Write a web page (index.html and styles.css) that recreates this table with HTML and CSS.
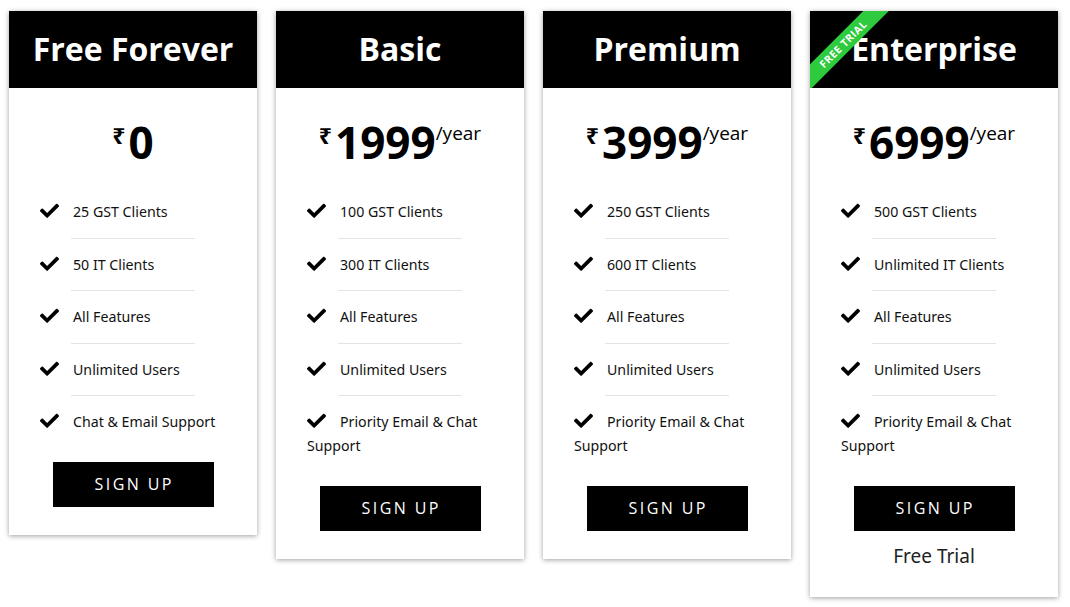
FILE: index.html
```html
<!DOCTYPE html>
<html>
<head>
<meta charset="utf-8">
<link rel="stylesheet" href="styles.css">
</head>
<body>
<div class="plans">
  <div class="card">
    <div class="card-head"><h2>Free Forever</h2></div>
    <div class="price"><span class="cur">₹</span><span class="amt">0</span></div>
    <ul class="features">
      <li><svg class="chk" viewBox="0 0 512 400"><path d="M173.9 391.4l-166.4-166.4c-10-10-10-26.2 0-36.2l36.2-36.2c10-10 26.2-10 36.2 0L192 264.7 432.1 24.6c10-10 26.2-10 36.2 0l36.2 36.2c10 10 10 26.2 0 36.2l-294.4 294.4c-10 10-26.2 10-36.2 0z"/></svg>25 GST Clients</li>
      <li><svg class="chk" viewBox="0 0 512 400"><path d="M173.9 391.4l-166.4-166.4c-10-10-10-26.2 0-36.2l36.2-36.2c10-10 26.2-10 36.2 0L192 264.7 432.1 24.6c10-10 26.2-10 36.2 0l36.2 36.2c10 10 10 26.2 0 36.2l-294.4 294.4c-10 10-26.2 10-36.2 0z"/></svg>50 IT Clients</li>
      <li><svg class="chk" viewBox="0 0 512 400"><path d="M173.9 391.4l-166.4-166.4c-10-10-10-26.2 0-36.2l36.2-36.2c10-10 26.2-10 36.2 0L192 264.7 432.1 24.6c10-10 26.2-10 36.2 0l36.2 36.2c10 10 10 26.2 0 36.2l-294.4 294.4c-10 10-26.2 10-36.2 0z"/></svg>All Features</li>
      <li><svg class="chk" viewBox="0 0 512 400"><path d="M173.9 391.4l-166.4-166.4c-10-10-10-26.2 0-36.2l36.2-36.2c10-10 26.2-10 36.2 0L192 264.7 432.1 24.6c10-10 26.2-10 36.2 0l36.2 36.2c10 10 10 26.2 0 36.2l-294.4 294.4c-10 10-26.2 10-36.2 0z"/></svg>Unlimited Users</li>
      <li><svg class="chk" viewBox="0 0 512 400"><path d="M173.9 391.4l-166.4-166.4c-10-10-10-26.2 0-36.2l36.2-36.2c10-10 26.2-10 36.2 0L192 264.7 432.1 24.6c10-10 26.2-10 36.2 0l36.2 36.2c10 10 10 26.2 0 36.2l-294.4 294.4c-10 10-26.2 10-36.2 0z"/></svg>Chat &amp; Email Support</li>
    </ul>
    <a class="btn">SIGN UP</a>
  </div>

  <div class="card">
    <div class="card-head"><h2>Basic</h2></div>
    <div class="price"><span class="cur">₹</span><span class="amt">1999</span><span class="per">/year</span></div>
    <ul class="features">
      <li><svg class="chk" viewBox="0 0 512 400"><path d="M173.9 391.4l-166.4-166.4c-10-10-10-26.2 0-36.2l36.2-36.2c10-10 26.2-10 36.2 0L192 264.7 432.1 24.6c10-10 26.2-10 36.2 0l36.2 36.2c10 10 10 26.2 0 36.2l-294.4 294.4c-10 10-26.2 10-36.2 0z"/></svg>100 GST Clients</li>
      <li><svg class="chk" viewBox="0 0 512 400"><path d="M173.9 391.4l-166.4-166.4c-10-10-10-26.2 0-36.2l36.2-36.2c10-10 26.2-10 36.2 0L192 264.7 432.1 24.6c10-10 26.2-10 36.2 0l36.2 36.2c10 10 10 26.2 0 36.2l-294.4 294.4c-10 10-26.2 10-36.2 0z"/></svg>300 IT Clients</li>
      <li><svg class="chk" viewBox="0 0 512 400"><path d="M173.9 391.4l-166.4-166.4c-10-10-10-26.2 0-36.2l36.2-36.2c10-10 26.2-10 36.2 0L192 264.7 432.1 24.6c10-10 26.2-10 36.2 0l36.2 36.2c10 10 10 26.2 0 36.2l-294.4 294.4c-10 10-26.2 10-36.2 0z"/></svg>All Features</li>
      <li><svg class="chk" viewBox="0 0 512 400"><path d="M173.9 391.4l-166.4-166.4c-10-10-10-26.2 0-36.2l36.2-36.2c10-10 26.2-10 36.2 0L192 264.7 432.1 24.6c10-10 26.2-10 36.2 0l36.2 36.2c10 10 10 26.2 0 36.2l-294.4 294.4c-10 10-26.2 10-36.2 0z"/></svg>Unlimited Users</li>
      <li><svg class="chk" viewBox="0 0 512 400"><path d="M173.9 391.4l-166.4-166.4c-10-10-10-26.2 0-36.2l36.2-36.2c10-10 26.2-10 36.2 0L192 264.7 432.1 24.6c10-10 26.2-10 36.2 0l36.2 36.2c10 10 10 26.2 0 36.2l-294.4 294.4c-10 10-26.2 10-36.2 0z"/></svg>Priority Email &amp; Chat Support</li>
    </ul>
    <a class="btn">SIGN UP</a>
  </div>

  <div class="card">
    <div class="card-head"><h2>Premium</h2></div>
    <div class="price"><span class="cur">₹</span><span class="amt">3999</span><span class="per">/year</span></div>
    <ul class="features">
      <li><svg class="chk" viewBox="0 0 512 400"><path d="M173.9 391.4l-166.4-166.4c-10-10-10-26.2 0-36.2l36.2-36.2c10-10 26.2-10 36.2 0L192 264.7 432.1 24.6c10-10 26.2-10 36.2 0l36.2 36.2c10 10 10 26.2 0 36.2l-294.4 294.4c-10 10-26.2 10-36.2 0z"/></svg>250 GST Clients</li>
      <li><svg class="chk" viewBox="0 0 512 400"><path d="M173.9 391.4l-166.4-166.4c-10-10-10-26.2 0-36.2l36.2-36.2c10-10 26.2-10 36.2 0L192 264.7 432.1 24.6c10-10 26.2-10 36.2 0l36.2 36.2c10 10 10 26.2 0 36.2l-294.4 294.4c-10 10-26.2 10-36.2 0z"/></svg>600 IT Clients</li>
      <li><svg class="chk" viewBox="0 0 512 400"><path d="M173.9 391.4l-166.4-166.4c-10-10-10-26.2 0-36.2l36.2-36.2c10-10 26.2-10 36.2 0L192 264.7 432.1 24.6c10-10 26.2-10 36.2 0l36.2 36.2c10 10 10 26.2 0 36.2l-294.4 294.4c-10 10-26.2 10-36.2 0z"/></svg>All Features</li>
      <li><svg class="chk" viewBox="0 0 512 400"><path d="M173.9 391.4l-166.4-166.4c-10-10-10-26.2 0-36.2l36.2-36.2c10-10 26.2-10 36.2 0L192 264.7 432.1 24.6c10-10 26.2-10 36.2 0l36.2 36.2c10 10 10 26.2 0 36.2l-294.4 294.4c-10 10-26.2 10-36.2 0z"/></svg>Unlimited Users</li>
      <li><svg class="chk" viewBox="0 0 512 400"><path d="M173.9 391.4l-166.4-166.4c-10-10-10-26.2 0-36.2l36.2-36.2c10-10 26.2-10 36.2 0L192 264.7 432.1 24.6c10-10 26.2-10 36.2 0l36.2 36.2c10 10 10 26.2 0 36.2l-294.4 294.4c-10 10-26.2 10-36.2 0z"/></svg>Priority Email &amp; Chat Support</li>
    </ul>
    <a class="btn">SIGN UP</a>
  </div>

  <div class="card">
    <div class="card-head"><h2>Enterprise</h2><span class="ribbon">FREE TRIAL</span></div>
    <div class="price"><span class="cur">₹</span><span class="amt">6999</span><span class="per">/year</span></div>
    <ul class="features">
      <li><svg class="chk" viewBox="0 0 512 400"><path d="M173.9 391.4l-166.4-166.4c-10-10-10-26.2 0-36.2l36.2-36.2c10-10 26.2-10 36.2 0L192 264.7 432.1 24.6c10-10 26.2-10 36.2 0l36.2 36.2c10 10 10 26.2 0 36.2l-294.4 294.4c-10 10-26.2 10-36.2 0z"/></svg>500 GST Clients</li>
      <li><svg class="chk" viewBox="0 0 512 400"><path d="M173.9 391.4l-166.4-166.4c-10-10-10-26.2 0-36.2l36.2-36.2c10-10 26.2-10 36.2 0L192 264.7 432.1 24.6c10-10 26.2-10 36.2 0l36.2 36.2c10 10 10 26.2 0 36.2l-294.4 294.4c-10 10-26.2 10-36.2 0z"/></svg>Unlimited IT Clients</li>
      <li><svg class="chk" viewBox="0 0 512 400"><path d="M173.9 391.4l-166.4-166.4c-10-10-10-26.2 0-36.2l36.2-36.2c10-10 26.2-10 36.2 0L192 264.7 432.1 24.6c10-10 26.2-10 36.2 0l36.2 36.2c10 10 10 26.2 0 36.2l-294.4 294.4c-10 10-26.2 10-36.2 0z"/></svg>All Features</li>
      <li><svg class="chk" viewBox="0 0 512 400"><path d="M173.9 391.4l-166.4-166.4c-10-10-10-26.2 0-36.2l36.2-36.2c10-10 26.2-10 36.2 0L192 264.7 432.1 24.6c10-10 26.2-10 36.2 0l36.2 36.2c10 10 10 26.2 0 36.2l-294.4 294.4c-10 10-26.2 10-36.2 0z"/></svg>Unlimited Users</li>
      <li><svg class="chk" viewBox="0 0 512 400"><path d="M173.9 391.4l-166.4-166.4c-10-10-10-26.2 0-36.2l36.2-36.2c10-10 26.2-10 36.2 0L192 264.7 432.1 24.6c10-10 26.2-10 36.2 0l36.2 36.2c10 10 10 26.2 0 36.2l-294.4 294.4c-10 10-26.2 10-36.2 0z"/></svg>Priority Email &amp; Chat Support</li>
    </ul>
    <a class="btn">SIGN UP</a>
    <div class="trial">Free Trial</div>
  </div>
</div>
</body>
</html>
```

FILE: styles.css
```css
* { box-sizing: border-box; }
html, body { margin: 0; background: #fff; }
body {
  font-family: "Open Sans", "Noto Sans", "DejaVu Sans", sans-serif;
  color: #111;
}
.plans {
  display: flex;
  align-items: flex-start;
  gap: 19px;
  padding: 11px 9px;
}
.card {
  width: 248px;
  background: #fff;
  box-shadow: 0 1px 5px rgba(0, 0, 0, 0.38);
  display: flex;
  flex-direction: column;
  align-items: center;
  padding-bottom: 28px;
}
.card-head {
  position: relative;
  overflow: hidden;
  align-self: stretch;
  height: 77px;
  background: #000;
  display: flex;
  align-items: center;
  justify-content: center;
}
.card-head h2 {
  margin: -2px 0 0;
  color: #fff;
  font-size: 32px;
  font-weight: 700;
  line-height: 1;
}
.ribbon {
  position: absolute;
  left: -27px;
  top: 24px;
  width: 120px;
  height: 18px;
  line-height: 18px;
  background: #2ecb3e;
  color: #fff;
  font-size: 10.5px;
  font-weight: 700;
  letter-spacing: 0.5px;
  text-align: center;
  transform: rotate(-45deg);
}
.price {
  margin-top: 32px;
  display: flex;
  align-items: flex-start;
  line-height: 1;
  color: #000;
}
.cur {
  font-size: 23px;
  font-weight: 700;
  margin-top: 4px;
  margin-right: 3px;
}
.amt {
  font-size: 44px;
  font-weight: 700;
}
.per {
  font-size: 19px;
  margin-top: 4px;
}
.features {
  list-style: none;
  margin: 22px 0 0;
  padding: 0 31px;
  align-self: stretch;
  font-family: "Noto Sans", "Open Sans", sans-serif;
  font-size: 14.2px;
  line-height: 24px;
}
.features li {
  padding-top: 14px;
}
.features li::after {
  content: "";
  display: block;
  width: 124px;
  height: 1px;
  margin: 13.5px auto 0;
  background: #e4e4e4;
}
.features li:last-child::after {
  background: transparent;
}
.chk {
  width: 19px;
  height: 15px;
  vertical-align: -1px;
  margin-right: 14px;
  fill: #000;
}
.btn {
  display: block;
  margin-top: 13px;
  width: 161px;
  height: 45px;
  line-height: 45px;
  background: #000;
  color: #fff;
  text-align: center;
  font-size: 16px;
  letter-spacing: 2.4px;
  text-indent: 2.4px;
}
.trial {
  margin-top: 12px;
  font-family: "Noto Sans", "Open Sans", sans-serif;
  font-size: 19px;
  line-height: 26px;
  color: #222;
}
```
